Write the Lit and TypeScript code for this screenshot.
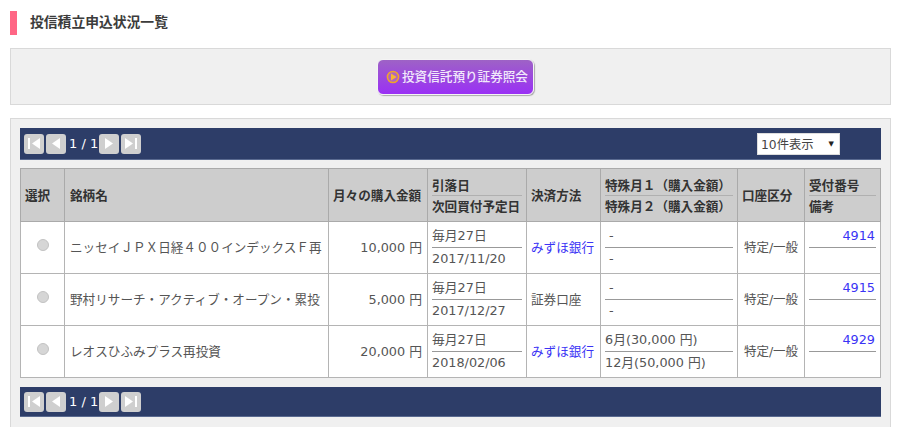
import { LitElement, html, css, svg } from "lit";
import { customElement } from "lit/decorators.js";

const first = svg`<rect x="4" y="4" width="2" height="11" fill="#fff"/><path d="M16 4v11L8 9.5z" fill="#fff"/>`;
const prev = svg`<path d="M14 4v11L6 9.5z" fill="#fff"/>`;
const next = svg`<path d="M6 4v11l8-5.5z" fill="#fff"/>`;
const last = svg`<rect x="14" y="4" width="2" height="11" fill="#fff"/><path d="M4 4v11l8-5.5z" fill="#fff"/>`;

interface Row {
  name: string; amount: string; date1: string; date2: string;
  pay: string; link: boolean; s1: string; s2: string; no: string;
}
const rows: Row[] = [
  { name: "ニッセイＪＰＸ日経４００インデックスＦ再", amount: "10,000 円", date1: "毎月27日", date2: "2017/11/20", pay: "みずほ銀行", link: true, s1: "-", s2: "-", no: "4914" },
  { name: "野村リサーチ・アクティブ・オープン・累投", amount: "5,000 円", date1: "毎月27日", date2: "2017/12/27", pay: "証券口座", link: false, s1: "-", s2: "-", no: "4915" },
  { name: "レオスひふみプラス再投資", amount: "20,000 円", date1: "毎月27日", date2: "2018/02/06", pay: "みずほ銀行", link: true, s1: "6月(30,000 円)", s2: "12月(50,000 円)", no: "4929" },
];

@customElement("app-root")
export class AppRoot extends LitElement {
  static styles = css`
    :host {
      display: block; width: 900px; height: 427px; overflow: hidden; background: #fff;
      font-family: "DejaVu Sans", "Noto Sans CJK JP", sans-serif; font-size: 12.8px; color: #555;
      box-sizing: border-box; padding: 11px 9px 0 10px;
    }
    * { box-sizing: border-box; }
    .title {
      height: 24px; border-left: 7px solid #ff6685; padding-left: 13px;
      font-size: 13.8px; font-weight: 700; color: #3c3c3c; line-height: 21px;
      font-family: "Noto Sans CJK JP", sans-serif;
    }
    .box { background: #f0f0f0; border: 1px solid #d9d9d9; }
    .top { margin-top: 13px; height: 57px; display: flex; justify-content: center; align-items: flex-start; padding-left: 10px; padding-top: 10px; }
    .btn {
      width: 157px; height: 36px; border-radius: 6px; border: 1px solid #f4f4f4;
      box-shadow: 1px 1px 1px #aaa;
      background: linear-gradient(#9e62c6, #9a30f5);
      color: #f1e8fb; display: flex; align-items: center; padding: 0 0 3px 8px; gap: 2px;
      font-family: "Noto Sans CJK JP", sans-serif; font-size: 12.6px; font-weight: 500; white-space: nowrap;
    }
    .btn svg { margin-top: 3px; }
    .main { margin-top: 13px; height: 330px; padding: 9px 9px 0 9px; }
    .nav { background: #2d3d68; height: 32px; display: flex; align-items: center; padding: 0 0 0 4px; border-bottom: 1px solid #5a6a90; }
    .nav.b { height: 30px; margin-top: 9px; }
    .pb { width: 20px; height: 20px; background: #cfcfcf; border-radius: 3px; display: block; margin-right: 2px; }
    .pg { color: #fff; width: 30px; font-size: 13px; white-space: nowrap; margin-left: 1px; }
    .sel {
      margin-left: auto; margin-right: 41px; width: 83px; height: 22px; background: #fff; border: 1px solid #ddd;
      color: #444; display: flex; align-items: center; justify-content: space-between; padding: 0 5px 0 3px; font-size: 12.3px;
    }
    .sel i { font-style: normal; font-size: 7px; color: #222; }
    table { margin-top: 8px; width: 860px; border-collapse: collapse; table-layout: fixed; }
    th, td { border: 1px solid #aaa; padding: 0 4px 0 4px; overflow: hidden; }
    td { border-color: #b4b4b4; }
    th {
      background: #cdcdcd; color: #333; font-weight: 700; text-align: left; height: 53px; padding-bottom: 2px;
      font-family: "Noto Sans CJK JP", sans-serif; font-size: 12.6px;
    }
    td { background: #fff; height: 52px; padding-bottom: 2px; white-space: nowrap; }
    .dbl { padding-bottom: 0; vertical-align: top; padding-top: 0; }
    th.dbl > div { white-space: nowrap; }
    th.dbl > div:first-child { height: 27px; line-height: 31px; border-bottom: 1px solid #b0b0b0; }
    th.dbl > div:last-child { height: 25px; line-height: 20px; }
    td.dbl > div:first-child { height: 26px; line-height: 28px; border-bottom: 1px solid #999; }
    td.dbl > div:last-child { height: 25px; line-height: 21px; }
    .r { text-align: right; }
    td.r { padding-right: 5px; }
    .c { text-align: center; font-size: 12.5px; }
    .link { color: #3a33f5; }
    .pay { font-size: 12.6px; }
    .nm { font-family: "Noto Sans CJK JP", sans-serif; font-size: 12.6px; padding-left: 5px; }
    .no { padding-right: 1px; }
    .radio { display: block; margin: -3px auto 0; width: 12px; height: 12px; border-radius: 50%; background: #d6d6d6; border: 1px solid #c2c2c2; }
  `;

  private pager(bottom: boolean) {
    const b = (p: unknown) => html`<svg class="pb" viewBox="0 0 20 20">${p}</svg>`;
    return html`<div class="nav ${bottom ? "b" : ""}">
      ${b(first)}${b(prev)}<span class="pg">1 / 1</span>${b(next)}${b(last)}
      ${bottom ? "" : html`<div class="sel"><span>10件表示</span><i>▼</i></div>`}
    </div>`;
  }

  render() {
    return html`
      <div class="title">投信積立申込状況一覧</div>
      <div class="box top">
        <div class="btn">
          <svg width="14" height="14" viewBox="0 0 14 14"><circle cx="7" cy="7" r="5.6" fill="#b065c0" stroke="#f0a52a" stroke-width="1.5"/><path d="M5 3.6v6.8L10.6 7z" fill="#f8b830"/></svg>
          <span>投資信託預り証券照会</span>
        </div>
      </div>
      <div class="box main">
        ${this.pager(false)}
        <table>
          <colgroup>
            <col style="width:44px"/><col style="width:264px"/><col style="width:99px"/><col style="width:99px"/>
            <col style="width:74px"/><col style="width:137px"/><col style="width:67px"/><col style="width:76px"/>
          </colgroup>
          <thead><tr>
            <th>選択</th><th class="nm">銘柄名</th><th>月々の購入金額</th>
            <th class="dbl"><div>引落日</div><div>次回買付予定日</div></th>
            <th>決済方法</th>
            <th class="dbl"><div>特殊月１（購入金額）</div><div>特殊月２（購入金額）</div></th>
            <th>口座区分</th>
            <th class="dbl"><div>受付番号</div><div>備考</div></th>
          </tr></thead>
          <tbody>
            ${rows.map((r) => html`<tr>
              <td><span class="radio"></span></td>
              <td class="nm">${r.name}</td>
              <td class="r">${r.amount}</td>
              <td class="dbl"><div>${r.date1}</div><div>${r.date2}</div></td>
              <td class="pay ${r.link ? "link" : ""}">${r.pay}</td>
              <td class="dbl"><div>${r.s1 === "-" ? html`&nbsp;-` : r.s1}</div><div>${r.s2 === "-" ? html`&nbsp;-` : r.s2}</div></td>
              <td class="c">特定/一般</td>
              <td class="dbl"><div class="r link no">${r.no}</div><div></div></td>
            </tr>`)}
          </tbody>
        </table>
        ${this.pager(true)}
      </div>
    `;
  }
}
